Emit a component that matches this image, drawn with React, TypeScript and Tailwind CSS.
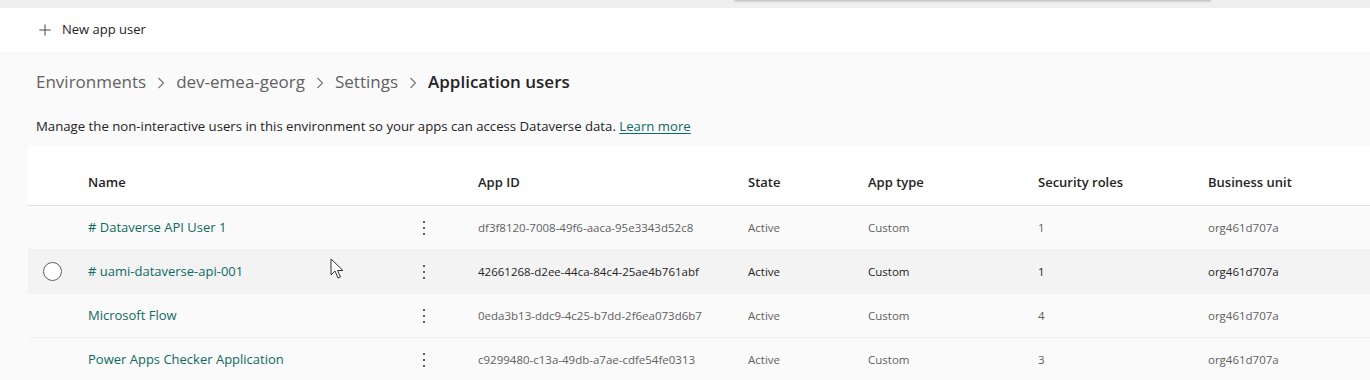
import { Plus } from "lucide-react";

interface AppUser {
  name: string;
  appId: string;
  state: string;
  appType: string;
  roles: number;
  unit: string;
}

const users: AppUser[] = [
  { name: "# Dataverse API User 1", appId: "df3f8120-7008-49f6-aaca-95e3343d52c8", state: "Active", appType: "Custom", roles: 1, unit: "org461d707a" },
  { name: "# uami-dataverse-api-001", appId: "42661268-d2ee-44ca-84c4-25ae4b761abf", state: "Active", appType: "Custom", roles: 1, unit: "org461d707a" },
  { name: "Microsoft Flow", appId: "0eda3b13-ddc9-4c25-b7dd-2f6ea073d6b7", state: "Active", appType: "Custom", roles: 4, unit: "org461d707a" },
  { name: "Power Apps Checker Application", appId: "c9299480-c13a-49db-a7ae-cdfe54fe0313", state: "Active", appType: "Custom", roles: 3, unit: "org461d707a" },
];

const cols = "grid grid-cols-[60px_336px_54px_270px_120px_170px_170px_1fr]";

function Kebab() {
  return (
    <div className="flex flex-col gap-[4px] ml-[-1px]">
      <span className="block w-[2px] h-[2px] bg-[#5c5c5c]" />
      <span className="block w-[2px] h-[2px] bg-[#5c5c5c]" />
      <span className="block w-[2px] h-[2px] bg-[#5c5c5c]" />
    </div>
  );
}

function Chevron() {
  return (
    <svg width="8" height="12" viewBox="0 0 8 12" className="mx-[11px] mt-[2px]">
      <path d="M1.5 1 L6.5 6 L1.5 11" fill="none" stroke="#757575" strokeWidth="1.1" />
    </svg>
  );
}

export default function App() {
  const hovered = 1;
  return (
    <div className="w-[1370px] h-[380px] overflow-hidden bg-[#fafafa] font-['Open_Sans',sans-serif] text-[#242424]">
      {/* top strip with open dropdown edge */}
      <div className="relative h-[8px] bg-[#efefef]">
        <div className="absolute left-[734px] top-0 w-[477px] h-[1px] bg-[#c8c8c8] shadow-[0_1px_2px_rgba(0,0,0,0.2)] rounded-b-sm" />
      </div>

      {/* command bar */}
      <div className="h-[44px] bg-white flex items-center pl-[36px]">
        <Plus size={18} strokeWidth={1.3} className="text-[#424242]" />
        <span className="ml-[8px] text-[13px] text-[#242424]">New app user</span>
      </div>

      {/* breadcrumb */}
      <div className="pl-[36px] pt-[17px] flex items-center text-[17px] leading-[26px]">
        <span className="text-[#616161]">Environments</span>
        <Chevron />
        <span className="text-[#616161]">dev-emea-georg</span>
        <Chevron />
        <span className="text-[#616161]">Settings</span>
        <Chevron />
        <span className="font-semibold text-[#242424]">Application users</span>
      </div>

      <p className="pl-[36px] pt-[22px] text-[13.2px] leading-[18px] text-[#242424]">
        Manage the non-interactive users in this environment so your apps can access Dataverse data.{" "}
        <a className="text-[#0f6b5f] underline underline-offset-2">Learn more</a>
      </p>

      {/* table */}
      <div className="ml-[28px] mt-[11px]">
        <div className={`${cols} h-[60px] bg-white border-b border-[#e0e0e0] items-end pb-[13px] text-[13px] font-semibold text-[#242424]`}>
          <div />
          <div>Name</div>
          <div />
          <div>App ID</div>
          <div>State</div>
          <div>App type</div>
          <div>Security roles</div>
          <div>Business unit</div>
        </div>
        {users.map((u, i) => {
          const hot = i === hovered;
          const cell = hot ? "text-[#242424]" : "text-[#616161]";
          return (
            <div
              key={u.appId}
              className={`${cols} h-[44px] items-center border-b ${hot ? "bg-[#f3f3f3] border-[#f3f3f3]" : "bg-[#fafafa] border-[#f0f0f0]"} text-[11.5px]`}
            >
              <div className="flex justify-center pr-[12px]">
                {hot && <span className="block w-[19px] h-[19px] rounded-full border border-[#616161] bg-white" />}
              </div>
              <div className="relative text-[13px] text-[#0f6b5f]">
                {u.name}
                {hot && (
                  <svg width="14" height="22" viewBox="0 0 14 22" className="absolute left-[242px] top-[-4px]">
                    <path d="M1 1 L1 17 L5 13 L8 20 L10.5 19 L7.5 12.5 L13 12.5 Z" fill="white" stroke="#333" strokeWidth="1" strokeLinejoin="round" />
                  </svg>
                )}
              </div>
              <div className="flex">
                <Kebab />
              </div>
              <div className={cell}>{u.appId}</div>
              <div className={cell}>{u.state}</div>
              <div className={cell}>{u.appType}</div>
              <div className={cell}>{u.roles}</div>
              <div className={cell}>{u.unit}</div>
            </div>
          );
        })}
      </div>
    </div>
  );
}
